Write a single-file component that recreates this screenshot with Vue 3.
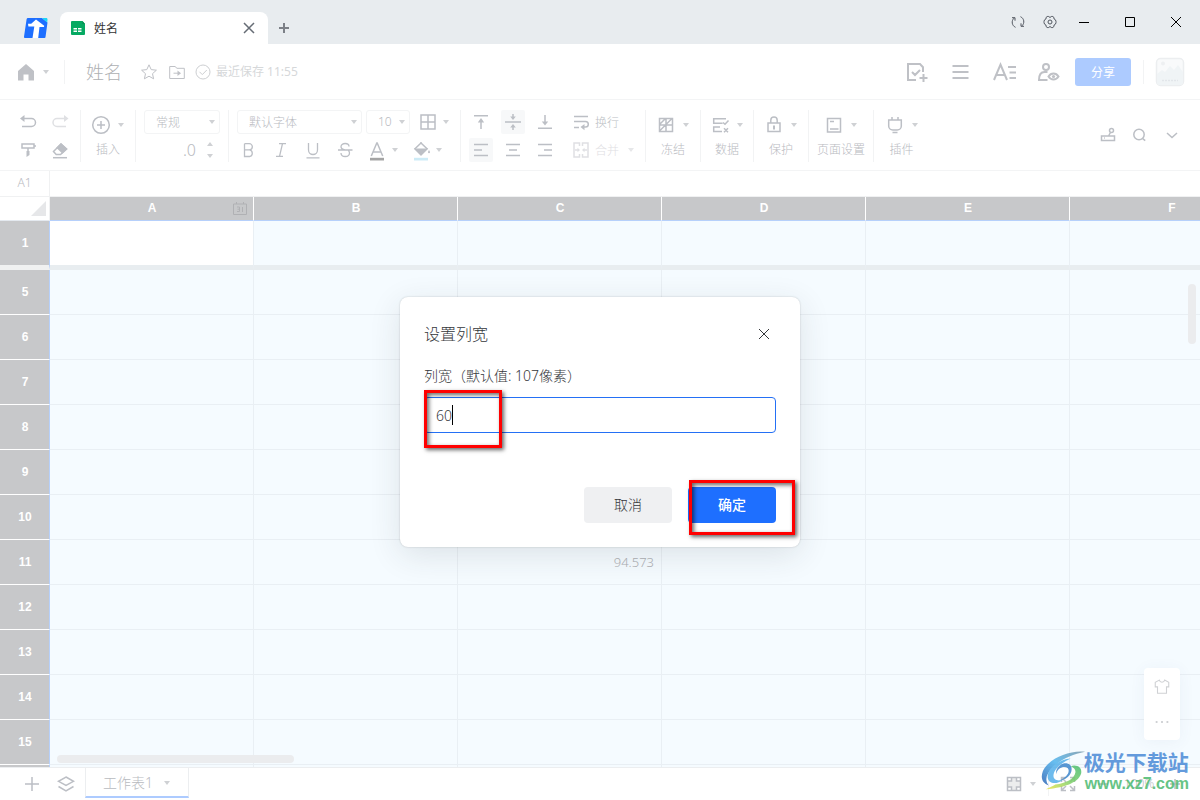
<script setup>
import { ref, computed, onMounted, onUnmounted } from 'vue'

const width = ref('60')

const view = ref({ w: window.innerWidth, h: window.innerHeight })
const measure = () => { view.value = { w: window.innerWidth, h: window.innerHeight } }
onMounted(() => window.addEventListener('resize', measure))
onUnmounted(() => window.removeEventListener('resize', measure))

const letters = computed(() =>
  'ABCDEFGHIJKLMNOPQRSTUVWXYZ'.split('').slice(0, Math.ceil((view.value.w - 50) / 204)))
// The last row may be only partly visible; its number shows once half of the row fits.
const rows = computed(() => {
  const fit = Math.max(1, (view.value.h - 303) / 45)
  return Array.from({ length: Math.ceil(fit) }, (_, i) => ({ n: i + 5, label: fit - i > 0.5 ? i + 5 : '' }))
})
const cells = { '11C': '94.573' }

const icons = {
  undo: '<path d="M5 6.500h8.500a4 4 0 0 1 0 8H4"/><path d="M6.500 3v7L2 6.500z" fill="currentColor" stroke="none"/>',
  redo: '<path d="M15 6.500H7a4 4 0 0 0 0 8h9"/><path d="M14 3v7l4.500-3.500z" fill="currentColor" stroke="none"/>',
  painter: '<path d="M4 4h12v4H4zM16 6h2M10 8v3"/><path d="M8.500 11h3v4l-3 2z" fill="currentColor" stroke="none"/>',
  eraser: '<path d="M3.500 11.500 11 4l5.500 5-6 5.500H6.200z"/><path d="M11 4l5.500 5-4 3.700-5.200-5z" fill="currentColor"/><path d="M3 17.700h14"/>',
  insert: '<circle cx="10" cy="10" r="8.300"/><path d="M10 6v8M6 10h8"/>',
  borders: '<path d="M3 3h14v14H3zM10 3v14M3 10h14"/>',
  bold: '<path d="M5.500 3.700v12.800h5.300a3.500 3.500 0 0 0 0-6.700H5.500M5.500 3.700h4.800a3 3 0 0 1 0 6.100"/>',
  italic: '<path d="M8 3.700h7M5 16.300h7M11.500 3.700 8.500 16.300"/>',
  underline: '<path d="M5.500 3v7a4.500 4.500 0 0 0 9 0V3M3.500 17.800h13"/>',
  strike: '<path d="M14 6.500C14 4.500 12.300 3.500 10.200 3.500S6 4.500 6 6.700c0 2 1.700 2.700 4 3.200M6 13c0 2.200 1.800 3.500 4.200 3.500S14.500 15.300 14.500 13c0-1.200-.5-2-1.300-2.500M3 10h14.500"/>',
  color: '<path d="M4.300 16 9.800 3h.4l5.500 13M6.100 12h7.800"/><path d="M3 17.800h14v2.700H3z" fill="#a4a4a4" stroke="none"/>',
  fill: '<path d="m10 3 6 5.800-6 6-6-6zM10 3V2"/><path d="M4.500 9.200h11L10 14.800z" fill="currentColor"/><path d="M18 10c1.600 2.400 1 3.300 0 3.300s-1.600-.9 0-3.300z" fill="currentColor" stroke="none"/><path d="M3 17.800h14v2.700H3z" fill="#cdebf6" stroke="none"/>',
  top: '<path d="M3 3.700h14M10 8v9"/><path d="M10 6l3.200 4.500H6.800z" fill="currentColor" stroke="none"/>',
  middle: '<path d="M2 10h16M10 2v3M10 18v-3"/><path d="M10 8 7.200 4.500h5.600zM10 12l-2.800 3.500h5.600z" fill="currentColor" stroke="none"/>',
  bottom: '<path d="M3 16.300h14M10 3v9"/><path d="M10 13.500 6.800 9.500h6.400z" fill="currentColor" stroke="none"/>',
  left: '<path d="M3 4.500h14M3 10h8M3 15.500h14"/>',
  center: '<path d="M3 4.500h14M6 10h8M3 15.500h14"/>',
  right: '<path d="M3 4.500h14M9 10h8M3 15.500h14"/>',
  wrap: '<path d="M3 4.500h14M3 9.500h11.500a2.800 2.800 0 0 1 0 5.600H12M3 15.500h5"/><path d="M13.500 12v6.200L9.500 15.100z" fill="currentColor" stroke="none"/>',
  merge: '<path d="M8.500 6V3H3v14h5.500v-3M11.500 6V3H17v14h-5.500v-3M4 10h3M16 10h-3"/><path d="M9 10 6.500 7.800v4.400zM11 10l2.500-2.200v4.400z" fill="currentColor" stroke="none"/>',
  freeze: '<path d="M3.500 3.500h13v13h-13zM10 3.500v13M3.500 10h13M3.500 9.500l6-6M10 9.500l6-6M3.500 16l6-6"/>',
  data: '<path d="M16 3.700H3.700v4.600h8.800M10 12H3.700v4.500H12M13 7.500l2 1.800 3.500-3.800M14 13.200l4 4M18 13.200l-4 4"/>',
  lock: '<path d="M4 8h12v8.500H4zM6.800 8V5.200a3.200 3.200 0 0 1 6.400 0V8"/><path d="M10 10.500v4" stroke-width="2"/>',
  page: '<path d="M3.500 3.500h13v13.500h-13zM6 6.500h4M6 14h8.500"/>',
  plugin: '<path d="M3.700 5h12.600v6a4 4 0 0 1-4 4H7.700a4 4 0 0 1-4-4zM7 5V2M13 5V2M7.500 17.500h5"/>',
  macro: '<path d="M3.500 11h13v4.500h-13zM6 13h.8M10.500 11l2-3.500"/><circle cx="13.500" cy="5.500" r="2"/>',
  search: '<circle cx="9" cy="9.500" r="5.200"/><path d="m12.700 13.700 2.500 2"/>',
  down: '<path d="m5 8 5 4.500L15 8"/>',
  home: '<path d="M10 2 2 9v9.500h5.500v-6h5v6H18V9z" fill="currentColor" stroke="none"/>',
  star: '<path d="m10 2.800 2.200 4.800 5.200.6-3.900 3.500 1.100 5.100-4.600-2.600-4.600 2.600 1.100-5.100-3.900-3.500 5.200-.6z"/>',
  folder: '<path d="M2.700 16V4.500H8l2 1.800h7.300V16.500H2.700zM6.500 11.200H12"/><path d="M10.500 8.500 14 11.200l-3.500 2.700z" fill="currentColor" stroke="none"/>',
  saved: '<circle cx="10" cy="10" r="7"/><path d="m6.500 9.800 2.800 2.800 4.500-4.600"/>',
  todo: '<path d="M12 20H4V4h12l3 3.200V12M8 12l3 3 5-5M19.500 14v8M15.500 18h8"/>',
  menu: '<path d="M4.500 6h16M4.500 12h16M4.500 18h16"/>',
  style: '<path d="M2 20 8.500 4.500 15 20M4.500 15h8M16 7h8M17.500 12.500H24M17.500 18H24"/>',
  person: '<path d="M11.500 20H3c0-5.500 2-8 5.500-8h3"/><circle cx="10" cy="7" r="3"/><path d="M12.500 16.500c1.500-2.400 3-3 5-3s3.500.6 5 3c-1.500 2.400-3 3-5 3s-3.500-.6-5-3z"/><circle cx="17.500" cy="16.500" r="1.600" fill="currentColor" stroke="none"/>',
  plus: '<path d="M10 3v14M3 10h14"/>',
  minus: '<path d="M5 10h10"/>',
  layers: '<path d="m10 3 7.500 4.300L10 11.500 2.500 7.300zM2.500 12.500 10 17l7.500-4.500"/>',
  gridview: '<path d="M7 3.500h6V7h3.500v6H13v3.500H7V13H3.500V7H7z" fill="#eceded" stroke="none"/><path d="M3.500 3.500h13v13h-13zM7.500 3.500v3.500h-4M12.500 3.500v3.500h4M7.500 16.500V13h-4M12.500 16.500V13h4"/>',
  expand: '<path d="M3.500 8V3.500H8M12 3.500h4.500V8M16.500 12v4.500H12M8 16.500H3.500V12M4 4l4 4M16 4l-4 4M16 16l-4-4M4 16l4-4"/>',
  shirt: '<path d="M7 3.500 2.500 6v5H5v7h10v-7h2.500V6L13 3.500c-.8 3-5.200 3-6 0z"/>',
  more: '<path d="M3 9h2v2H3zM9 9h2v2H9zM15 9h2v2h-2z" fill="currentColor" stroke="none"/>',
  sync: '<path d="M7.500 15.300A5.500 5.500 0 0 1 6 6.200M4 5.700h3v3M12.500 4.700a5.500 5.500 0 0 1 1.500 9.100M16 14.300h-3v-3"/>',
  gear: '<path d="M7.200 4.500h1.500L10 5.500l1.300-1h1.500l1 .8.300 1.700 1.400.9.500 1.600v1l-.5 1.600-1.400.9-.3 1.700-1 .8h-1.500l-1.300-1-1.300 1H7.200l-1-.8-.3-1.700-1.400-.9-.5-1.600v-1l.5-1.600L5.900 7l.3-1.700z"/><circle cx="10" cy="10" r="2"/>',
  close: '<path d="m5 5 10 10M15 5 5 15"/>',
  square: '<path d="M5.500 5.500h9v9h-9z"/>',
}

const tools = [
  { icon: 'freeze', label: '冻结', size: 'w55' },
  { icon: 'data', label: '数据', size: 'w53' },
  { icon: 'lock', label: '保护', size: 'w55' },
  { icon: 'page', label: '页面设置', size: 'w65' },
  { icon: 'plugin', label: '插件', size: 'w55' },
]
</script>

<template>
  <div class="app">
    <header class="titlebar">
      <svg class="logo" viewBox="0 0 24 20" aria-hidden="true">
        <path d="M4 0h14l5.500 4.500L21.500 19a1 1 0 0 1-1 1H1a1 1 0 0 1-1-1.200L2.600 1.200A1.400 1.400 0 0 1 4 0z" fill="#1e6fff" />
        <path d="M18 0h4.200c.9 0 1.400.6 1.300 1.500L23.200 4.500z" fill="#1fd5f5" />
        <path d="M4 5.800h3.200L12 1.500l8.200 6.200-.2 1.300h-4.500L14.200 20H8.500L10.300 8.600H4.400z" fill="#fff" />
      </svg>
      <div class="tab">
        <svg class="favicon" viewBox="0 0 14 14" aria-hidden="true">
          <path d="M1 0h10.500L14 3v10a1 1 0 0 1-1 1H1a1 1 0 0 1-1-1V1a1 1 0 0 1 1-1z" fill="#06a962" />
          <path d="M11.500 0 14 3h-2.500z" fill="#058a50" />
          <path d="M2.500 7.800H6M7 7.800h3.500M2.500 10.300H6M7 10.300h3.500" stroke="#fff" stroke-width="1.400" />
        </svg>
        <span class="tab-name cjk">姓名</span>
        <button class="ib tab-x" aria-label="关闭标签"><svg viewBox="0 0 20 20" v-html="icons.close" /></button>
      </div>
      <button class="ib tab-new" aria-label="新建标签"><svg viewBox="0 0 20 20"><path d="M10 5v10M5 10h10" /></svg></button>
      <div class="win">
        <button class="ib soft" aria-label="同步"><svg viewBox="0 0 20 20" v-html="icons.sync" /></button>
        <button class="ib soft" aria-label="设置"><svg viewBox="0 0 20 20" v-html="icons.gear" /></button>
        <div class="win-main">
          <button class="ib" aria-label="最小化"><svg viewBox="0 0 20 20"><path d="M5 10.500h10" /></svg></button>
          <button class="ib" aria-label="最大化"><svg viewBox="0 0 20 20" v-html="icons.square" /></button>
          <button class="ib" aria-label="关闭"><svg viewBox="0 0 20 20" v-html="icons.close" /></button>
        </div>
      </div>
    </header>

    <main class="work">
      <div class="docbar">
        <button class="ib" aria-label="首页"><svg viewBox="0 0 20 20" v-html="icons.home" /></button>
        <svg class="caret home-caret" viewBox="0 0 8 8"><path d="M1 2h6L4 6z" /></svg>
        <i class="vline" />
        <h1>姓名</h1>
        <div class="docicons">
          <button class="ib" aria-label="收藏"><svg viewBox="0 0 20 20" v-html="icons.star" /></button>
          <button class="ib" aria-label="移动"><svg viewBox="0 0 20 20" v-html="icons.folder" /></button>
        </div>
        <span class="saved"><svg viewBox="0 0 20 20" v-html="icons.saved" />最近保存 11:55</span>
        <div class="docright">
          <button class="ib big" aria-label="待办"><svg viewBox="0 0 24 24" v-html="icons.todo" /></button>
          <button class="ib big" aria-label="菜单"><svg viewBox="0 0 24 24" v-html="icons.menu" /></button>
          <button class="ib big" aria-label="样式"><svg viewBox="0 0 24 24" v-html="icons.style" /></button>
          <button class="ib big" aria-label="查看者"><svg viewBox="0 0 24 24" v-html="icons.person" /></button>
        </div>
        <button class="share cjk">分享</button>
        <i class="vline" />
        <svg class="avatar" viewBox="0 0 28 28" aria-hidden="true">
          <rect x=".5" y=".5" width="27" height="27" rx="4" fill="#f9fafb" stroke="#eceef0" />
          <circle cx="7" cy="5.500" r="2" fill="#eef0f2" />
          <path d="m1 16 5-4 3 2 5-6 4 4 4-5 5 7v11a2 2 0 0 1-2 2H3a2 2 0 0 1-2-2z" fill="#f0f4f6" />
          <path d="M6 22.500h16" stroke="#e2e6ea" stroke-dasharray="2 1" />
        </svg>
      </div>

      <div class="toolbar">
        <div class="group history">
          <button class="ib" aria-label="撤销"><svg viewBox="0 0 20 20" v-html="icons.undo" /></button>
          <button class="ib dim" aria-label="重做"><svg viewBox="0 0 20 20" v-html="icons.redo" /></button>
          <button class="ib" aria-label="格式刷"><svg viewBox="0 0 20 20" v-html="icons.painter" /></button>
          <button class="ib" aria-label="清除"><svg viewBox="0 0 20 20" v-html="icons.eraser" /></button>
        </div>
        <div class="group w55">
          <button class="tool cjk">
            <span><svg viewBox="0 0 20 20" v-html="icons.insert" /><svg class="caret" viewBox="0 0 8 8"><path d="M1 2h6L4 6z" /></svg></span>
            插入
          </button>
        </div>
        <div class="group stack format">
          <label class="pick number cjk">
            <select aria-label="数字格式"><option>常规</option></select>
            <svg class="caret" viewBox="0 0 8 8"><path d="M1 2h6L4 6z" /></svg>
          </label>
          <div class="decimals">
            <span>.0</span>
            <svg viewBox="0 0 8 20" aria-hidden="true"><path d="M1 6h6L4 2zM1 14h6l-3 4z" /></svg>
          </div>
        </div>
        <div class="group stack font">
          <div class="line">
            <label class="pick family cjk">
              <select aria-label="字体"><option>默认字体</option></select>
              <svg class="caret" viewBox="0 0 8 8"><path d="M1 2h6L4 6z" /></svg>
            </label>
            <label class="pick size">
              <select aria-label="字号"><option>10</option></select>
              <svg class="caret" viewBox="0 0 8 8"><path d="M1 2h6L4 6z" /></svg>
            </label>
            <button class="drop" aria-label="边框"><svg viewBox="0 0 20 20" v-html="icons.borders" /><svg class="caret" viewBox="0 0 8 8"><path d="M1 2h6L4 6z" /></svg></button>
          </div>
          <div class="line letters">
            <button class="ib" aria-label="加粗"><svg viewBox="0 0 20 20" v-html="icons.bold" /></button>
            <button class="ib" aria-label="斜体"><svg viewBox="0 0 20 20" v-html="icons.italic" /></button>
            <button class="ib" aria-label="下划线"><svg viewBox="0 0 20 20" v-html="icons.underline" /></button>
            <button class="ib" aria-label="删除线"><svg viewBox="0 0 20 20" v-html="icons.strike" /></button>
            <button class="drop" aria-label="文字颜色"><svg viewBox="0 0 20 20" v-html="icons.color" /><svg class="caret" viewBox="0 0 8 8"><path d="M1 2h6L4 6z" /></svg></button>
            <button class="drop" aria-label="填充颜色"><svg viewBox="0 0 20 20" v-html="icons.fill" /><svg class="caret" viewBox="0 0 8 8"><path d="M1 2h6L4 6z" /></svg></button>
          </div>
        </div>
        <div class="group align">
          <button class="ib" aria-label="顶端对齐"><svg viewBox="0 0 20 20" v-html="icons.top" /></button>
          <button class="ib on" aria-label="垂直居中"><svg viewBox="0 0 20 20" v-html="icons.middle" /></button>
          <button class="ib" aria-label="底端对齐"><svg viewBox="0 0 20 20" v-html="icons.bottom" /></button>
          <button class="wide cjk"><svg viewBox="0 0 20 20" v-html="icons.wrap" />换行</button>
          <button class="ib on" aria-label="左对齐"><svg viewBox="0 0 20 20" v-html="icons.left" /></button>
          <button class="ib" aria-label="居中"><svg viewBox="0 0 20 20" v-html="icons.center" /></button>
          <button class="ib" aria-label="右对齐"><svg viewBox="0 0 20 20" v-html="icons.right" /></button>
          <button class="wide dim cjk"><svg viewBox="0 0 20 20" v-html="icons.merge" />合并<svg class="caret" viewBox="0 0 8 8"><path d="M1 2h6L4 6z" /></svg></button>
        </div>
        <div v-for="t in tools" :key="t.icon" class="group" :class="t.size">
          <button class="tool cjk">
            <span><svg viewBox="0 0 20 20" v-html="icons[t.icon]" /><svg class="caret" viewBox="0 0 8 8"><path d="M1 2h6L4 6z" /></svg></span>
            {{ t.label }}
          </button>
        </div>
        <div class="toolright">
          <button class="ib" aria-label="宏"><svg viewBox="0 0 20 20" v-html="icons.macro" /></button>
          <button class="ib" aria-label="查找"><svg viewBox="0 0 20 20" v-html="icons.search" /></button>
          <button class="ib" aria-label="收起"><svg viewBox="0 0 20 20" v-html="icons.down" /></button>
        </div>
      </div>

      <div class="formula">
        <span>A1</span>
        <input type="text" aria-label="编辑栏" />
      </div>

      <div class="sheet">
        <table>
          <colgroup><col class="c0" /><col v-for="l in letters" :key="l" class="c" /></colgroup>
          <thead>
            <tr>
              <td class="corner"><svg viewBox="0 0 16 16" aria-hidden="true"><path d="M16 0v16H0z" /></svg></td>
              <th v-for="l in letters" :key="l">
                {{ l }}
                <svg v-if="l === 'A'" class="cal" viewBox="0 0 14 13" aria-hidden="true">
                  <path d="M.5 2h13v10.500H.5zM3.500 0v2M10.500 0v2" />
                  <path d="M4 5h2.500v4.500H4M4.500 7.200h2M9.500 5v5" />
                </svg>
              </th>
            </tr>
          </thead>
          <tbody>
            <tr class="frozen">
              <th>1</th>
              <td v-for="l in letters" :key="l" :class="{ active: l === 'A' }" />
            </tr>
            <tr v-for="r in rows" :key="r.n">
              <th>{{ r.label }}</th>
              <td v-for="l in letters" :key="l">{{ cells[r.n + l] }}</td>
            </tr>
          </tbody>
        </table>
        <i class="vscroll" />
        <i class="hscroll" />
        <div class="float">
          <button class="ib" aria-label="皮肤"><svg viewBox="0 0 20 20" v-html="icons.shirt" /></button>
          <button class="ib" aria-label="更多"><svg viewBox="0 0 20 20" v-html="icons.more" /></button>
        </div>
      </div>

      <footer class="bottom">
        <button class="ib" aria-label="添加工作表"><svg viewBox="0 0 20 20" v-html="icons.plus" /></button>
        <button class="ib" aria-label="全部工作表"><svg viewBox="0 0 20 20" v-html="icons.layers" /></button>
        <button class="sheettab">工作表1<svg class="caret" viewBox="0 0 8 8"><path d="M1 2h6L4 6z" /></svg></button>
        <div class="zoom">
          <button class="drop" aria-label="视图"><svg viewBox="0 0 20 20" v-html="icons.gridview" /><svg class="caret" viewBox="0 0 8 8"><path d="M1 2h6L4 6z" /></svg></button>
          <i class="vline" />
          <button class="ib" aria-label="全屏"><svg viewBox="0 0 20 20" v-html="icons.expand" /></button>
          <button class="ib" aria-label="缩小"><svg viewBox="0 0 20 20" v-html="icons.minus" /></button>
          <span>100%</span>
          <button class="ib" aria-label="放大"><svg viewBox="0 0 20 20"><path d="M10 5v10M5 10h10" /></svg></button>
        </div>
      </footer>

      <div class="overlay">
        <form class="dialog" role="dialog" aria-labelledby="dlg-title" @submit.prevent>
          <div class="dlg-head">
            <h2 id="dlg-title">设置列宽</h2>
            <button type="button" class="ib" aria-label="关闭对话框"><svg viewBox="0 0 20 20" v-html="icons.close" /></button>
          </div>
          <label for="colw">列宽（默认值: 107像素）</label>
          <div class="field">
            <input id="colw" v-model="width" type="text" />
            <i class="cursor" />
            <i class="mark mark-input" />
          </div>
          <div class="actions">
            <button type="button" class="cancel">取消</button>
            <div class="ok-wrap">
              <button type="submit" class="ok">确定</button>
              <i class="mark mark-ok" />
            </div>
          </div>
        </form>
      </div>
    </main>

    <div class="stamp">
      <svg viewBox="0 0 48 42" aria-hidden="true">
        <defs>
          <linearGradient id="blue" x1="0" y1="1" x2="1" y2="0"><stop offset="0" stop-color="#2a62b4" /><stop offset=".5" stop-color="#4fb4ee" /><stop offset="1" stop-color="#7a97a8" /></linearGradient>
          <linearGradient id="green" x1="0" y1="1" x2="1" y2="0"><stop offset="0" stop-color="#f2e64a" /><stop offset=".5" stop-color="#7fd06a" /><stop offset="1" stop-color="#45bb70" /></linearGradient>
        </defs>
        <path d="M46 1C30-1 8 8 2 21c-3 8 0 13 6 15-4-5-3-11 3-17C19 10 31 4 46 1z" fill="url(#blue)" />
        <path d="M31 8C18 9 6 19 7 28c1 7 10 7 16 2-6 2-10 0-10-4 0-7 9-14 18-18z" fill="#55b0ea" />
        <path d="M16 24c1-6 8-9 12-6 3 4-2 11-10 13 8 0 14-6 14-12 0-6-7-8-12-4-3 2-5 6-4 9z" fill="#3e86cc" />
        <path d="M31 16c6-2 12 1 11 7-2 9-15 15-37 17 5-2 8-4 10-5 11-1 20-6 21-13 0-3-2-5-5-6z" fill="url(#green)" />
      </svg>
      <div><strong>极光下载站</strong><span>www.xz7.com</span></div>
    </div>
  </div>
</template>

<style>
body { margin: 0; overflow: hidden; }
</style>

<style scoped>
* { box-sizing: border-box; }
.app { height: 100vh; display: flex; flex-direction: column; position: relative; overflow: hidden; background: #fff; color: #b9bbbf; font-family: "Noto Sans", "Noto Sans CJK SC", sans-serif; font-weight: 300; font-size: 12px; line-height: 20px; }
button, input, select { font: inherit; color: inherit; border: 0; background: none; padding: 0; margin: 0; outline: 0; }
i { display: block; }
svg { flex: none; width: 20px; height: 20px; display: block; fill: none; stroke: currentColor; stroke-width: 1.5; overflow: visible; }
.cjk { font-family: "Noto Sans CJK SC", sans-serif; }
.caret { width: 8px; height: 8px; fill: #cfd1d4; stroke: none; }
.ib { width: 24px; height: 24px; display: grid; place-items: center; flex: none; border-radius: 2px; }
.vline { width: 1px; height: 24px; background: #f2f3f4; flex: none; }

.titlebar { height: 44px; flex: none; display: flex; background: #e8ecef; color: #000; }
.logo { width: 24px; height: 20px; margin: 18px 12px 0 24px; stroke: none; }
.tab { width: 208px; height: 32px; margin-top: 12px; background: #fff; border-radius: 8px 8px 0 0; display: flex; align-items: center; padding: 0 7px 0 11px; }
.favicon { width: 14px; height: 14px; stroke: none; }
.tab-name { flex: 1; margin-left: 9px; color: #333; font-weight: 400; }
.tab-x { color: #666c75; }
.tab-new { margin: 16px 0 0 4px; color: #7c8087; }
.tab-new svg { stroke-width: 2; }
.win { margin: 10px 12px 0 auto; display: flex; gap: 8px; }
.win-main { display: flex; gap: 22px; margin-left: 2px; }
.win svg { stroke-width: 1; }
.win .soft { color: #50555e; }

.work { flex: 1; min-height: 0; display: flex; flex-direction: column; position: relative; }
.docbar { height: 56px; flex: none; display: flex; align-items: center; padding: 0 16px 0 14px; border-bottom: 1px solid #f3f4f5; }
.docbar .ib { color: #bfc1c6; }
.home-caret { margin: 0 14px 0 4px; }
h1 { margin: 0 15px 0 21px; font-size: 18px; font-weight: 300; line-height: 24px; color: #aeb0b3; }
.docicons { display: flex; gap: 4px; }
.docicons svg, .saved svg { stroke-width: 1; }
.saved { display: flex; align-items: center; gap: 3px; margin-left: 4px; color: #d6d8da; font-weight: 400; }
.saved svg { color: #cdcfd2; }
.docright { display: flex; gap: 20px; margin-left: auto; }
.docright svg { width: 24px; height: 24px; stroke-width: 2; }
.share { width: 56px; height: 28px; margin: 0 12px 0 15px; border-radius: 3px; background: #adcbff; color: #fff; font-weight: 400; }
.avatar { width: 28px; height: 28px; margin-left: 12px; stroke: none; }

.toolbar { height: 71px; flex: none; display: flex; align-items: flex-start; padding-top: 10px; border-bottom: 1px solid #f3f4f5; }
.group { height: 52px; border-right: 1px solid #f2f3f4; flex: none; }
.group:nth-last-child(2) { border-right: 0; }
.toolbar .ib, .toolbar .drop, .toolbar .wide, .tool svg { color: #bcbfc5; }
.toolbar .dim { color: #dfe0e3; }
.history { width: 81px; padding-left: 16px; display: grid; grid-template-columns: 24px 24px; gap: 4px 8px; align-content: start; }
.w53 { width: 53px; }
.w55 { width: 55px; }
.w65 { width: 65px; }
.tool { width: 100%; display: flex; flex-direction: column; align-items: center; gap: 4px; padding-top: 5px; white-space: nowrap; }
.tool span { display: flex; align-items: center; gap: 6px; }
.stack { display: flex; flex-direction: column; gap: 4px; }
.format { width: 93px; padding: 0 8px; }
.pick { display: grid; align-items: center; height: 24px; }
.pick select, .pick .caret { grid-area: 1 / 1; }
.pick select { appearance: none; width: 100%; height: 24px; padding: 0 11px; border: 1px solid #f3f4f5; border-radius: 3px; line-height: 20px; }
.pick .caret { justify-self: end; margin-right: 4px; pointer-events: none; }
.decimals { height: 24px; display: flex; align-items: center; justify-content: flex-end; gap: 10px; padding-right: 6px; font-size: 16px; }
.decimals svg { width: 8px; fill: #cfd1d4; stroke: none; }
.font { width: 232px; padding-left: 8px; }
.line { height: 24px; display: flex; align-items: center; }
.family { width: 125px; margin-right: 4px; }
.size { width: 44px; margin-right: 8px; }
.drop { display: flex; align-items: center; gap: 4px; }
.letters { gap: 8px; }
.letters .ib svg { stroke-width: 1.3; }
.letters .drop { padding-left: 2px; gap: 4px; width: 36px; }
.align { width: 185px; padding-left: 8px; display: grid; grid-template-columns: 24px 24px 24px 1fr; gap: 4px 8px; align-content: start; }
.align .on { background: #f7f8f9; }
.wide { height: 24px; display: flex; align-items: center; gap: 4px; padding-left: 6px; white-space: nowrap; }
.wide .caret { margin-left: 4px; fill: #e6e7e9; }
.toolright { display: flex; gap: 8px; margin: 13px 16px 0 auto; }

.formula { height: 26px; flex: none; display: flex; border-bottom: 1px solid #f0f1f2; }
.formula span { width: 50px; text-align: center; line-height: 24px; border-right: 1px solid #f0f1f2; }
.formula input { flex: 1; }

.sheet { flex: 1; min-height: 0; overflow: hidden; position: relative; background: #f5fbff; }
table { table-layout: fixed; width: max-content; border-collapse: separate; border-spacing: 0; }
.c0 { width: 50px; }
.c { width: 204px; }
th { padding: 0 0 0 1px; background: #c7c8ca; color: #fff; font: 700 12px/20px "Liberation Sans", Arial, sans-serif; }
thead th { height: 24px; padding-bottom: 2px; border-right: 1px solid #fff; border-bottom: 1px solid #b6d0fb; position: relative; }
.corner { height: 24px; padding: 0 3px 0 0; background: #fff; border-right: 1px solid #f0f1f2; border-bottom: 1px solid #e4e9ef; }
.corner svg { margin-left: auto; width: 15px; height: 15px; fill: #e6e7e9; stroke: none; }
.cal { position: absolute; right: 6px; top: 5px; width: 14px; height: 13px; color: #b0b1b4; stroke-width: 1; }
tbody td { height: 45px; padding: 0 7px; text-align: right; font-size: 13px; color: #aeb0b4; background: #f5fbff; border-right: 1px solid #e9eff4; border-bottom: 1px solid #e9eff4; }
tbody th { height: 45px; border-right: 1px solid #b6d0fb; border-bottom: 1px solid #fff; }
.frozen th, .frozen td { height: 49px; border-bottom: 5px solid #e8edf0; }
.frozen th { border-bottom-color: #f0f1f1; }
td.active { background: #fff; }
.vscroll { position: absolute; right: 4px; top: 87px; width: 8px; height: 60px; border-radius: 4px; background: #ebecee; }
.hscroll { position: absolute; left: 57px; bottom: 4px; width: 237px; height: 8px; border-radius: 4px; background: #ebecee; }
.float { position: absolute; right: 20px; bottom: 27px; width: 36px; height: 72px; padding: 6px; display: flex; flex-direction: column; justify-content: space-between; background: #fff; border-radius: 4px; box-shadow: 0 2px 16px rgba(60, 90, 130, .06); }
.float .ib { color: #cfd1d4; }
.float svg { width: 18px; height: 18px; stroke-width: 1.2; }

.bottom { height: 33px; flex: none; display: flex; align-items: center; border-top: 1px solid #eceef0; background: #fff; padding: 0 13px 0 20px; }
.bottom .ib, .bottom .drop { color: #bcbfc5; }
.bottom .ib + .ib { margin-left: 10px; }
.sheettab { height: 30px; align-self: flex-start; width: 104px; margin-left: 7px; display: flex; align-items: center; gap: 10px; padding: 2px 0 0 17px; font-size: 14px; border: 1px solid #eceef0; border-top: 0; border-bottom: 2px solid #adcbff; }
.zoom { margin-left: auto; display: flex; align-items: center; }
.zoom .drop { gap: 5px; }
.zoom .vline { margin: 0 7px 0 11px; }
.zoom .ib + .ib { margin-left: 11px; }
.zoom span { width: 48px; text-align: center; }

.overlay { position: absolute; inset: 0; display: grid; place-items: center; }
.dialog { width: 400px; max-width: 90%; padding: 24px; background: #fff; border-radius: 8px; box-shadow: 0 0 2px rgba(0, 0, 0, .2), 0 8px 32px rgba(40, 50, 60, .12); color: #35373b; }
.dlg-head { display: flex; justify-content: space-between; align-items: center; height: 26px; }
h2 { margin: 0; font-size: 16px; font-weight: 300; line-height: 26px; }
.dlg-head svg { stroke-width: 1; }
.dialog label { display: block; margin: 18px 0 10px; font-size: 14px; line-height: 22px; }
.field { position: relative; }
.field input { display: block; width: 100%; height: 36px; padding: 0 11px; border: 1px solid #2470f5; border-radius: 4px; font-size: 14px; }
.cursor { position: absolute; left: 28px; top: 8px; width: 1px; height: 20px; background: #000; }
.mark { position: absolute; border: 3px solid #f00; box-shadow: 2px 2px 4px rgba(0, 0, 0, .6), inset 2px 2px 4px rgba(0, 0, 0, .6); pointer-events: none; }
.mark-input { left: 0; top: -7px; width: 78px; height: 58px; }
.actions { display: flex; justify-content: flex-end; gap: 16px; margin-top: 54px; }
.ok-wrap { position: relative; }
.cancel, .ok { display: block; width: 88px; height: 36px; border-radius: 4px; font-size: 14px; }
.cancel { background: #eff0f2; }
.ok { background: #1e6fff; color: #fff; font-weight: 500; }
.mark-ok { left: 1px; top: -7px; width: 106px; height: 55px; }

.stamp { position: absolute; right: 11px; bottom: 6px; display: flex; pointer-events: none; opacity: .85; }
.stamp > svg { width: 46px; height: 42px; margin-right: -3px; stroke: none; }
.stamp div { display: flex; flex-direction: column; align-items: flex-start; }
.stamp strong { font-size: 21px; line-height: 24px; font-weight: 700; color: #4a8ad6; }
.stamp span { font: 700 16px/20px "Liberation Sans", Arial, sans-serif; color: #4cba70; padding-left: 1px; }
</style>
